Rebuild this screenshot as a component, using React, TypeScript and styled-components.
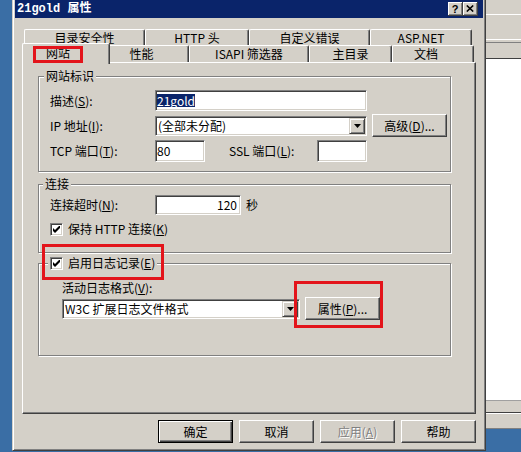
import React from "react";
import styled, { createGlobalStyle, css } from "styled-components";

const FACE = "#d4d0c8";
const SHADOW = "#808080";
const DARK = "#404040";
const HILITE = "#ffffff";
const DESK = "#3a6ea5";
const NAVY = "#0a246a";
const RED = "#e3141b";

const GlobalStyle = createGlobalStyle`
  html, body { margin: 0; padding: 0; background: ${DESK}; }
  body {
    font-family: "Noto Sans CJK SC", "Noto Sans", sans-serif;
    font-size: 12px;
    color: #000;
  }
  * { box-sizing: border-box; }
`;

const Screen = styled.div`
  display: grid;
  grid-template-columns: 12px 474px 1fr;
  align-items: start;
  width: 521px;
  height: 452px;
  overflow: hidden;
`;

const Desktop = styled.div``;

const Dialog = styled.div`
  display: flex;
  flex-direction: column;
  height: 451px;
  background: ${FACE};
  border-left: 1px solid ${FACE};
  border-right: 1px solid ${DARK};
  border-bottom: 1px solid ${DARK};
  box-shadow: inset 1px 0 ${HILITE}, inset -1px -1px ${SHADOW};
  padding: 0 2px 2px 2px;
`;

const TitleBar = styled.div`
  flex: none;
  height: 18px;
  background: ${NAVY};
  display: flex;
  align-items: center;
  padding: 0 5px 0 2px;
`;

const Title = styled.span`
  flex: 1;
  color: #fff;
  font-weight: bold;
  font-family: "Liberation Mono", "Noto Sans CJK SC", monospace;
  font-size: 12px;
  line-height: 18px;
  white-space: nowrap;
`;

const CaptionButtons = styled.div`
  display: flex;
`;

const CaptionButton = styled.div`
  width: 15px;
  height: 14px;
  background: ${FACE};
  box-shadow: inset -1px -1px ${DARK}, inset 1px 1px ${HILITE}, inset -2px -2px ${SHADOW};
  display: flex;
  align-items: center;
  justify-content: center;
  font: bold 11px "Liberation Sans", sans-serif;
  line-height: 14px;
  padding: 0 1px 1px 0;
`;

const Body = styled.div`
  flex: 1;
  display: flex;
  flex-direction: column;
  padding: 11px 7px 0 7px;
`;

const TabRow = styled.div<{ $h: number }>`
  display: flex;
  height: ${(p) => p.$h}px;
  padding-left: 2px;
`;

const Tab = styled.div<{ $w: number; $shift?: number; $selected?: boolean }>`
  flex: none;
  width: ${(p) => p.$w}px;
  background: ${FACE};
  border-top: 1px solid ${HILITE};
  border-left: 1px solid ${HILITE};
  border-right: 1px solid ${DARK};
  border-radius: 2px 2px 0 0;
  box-shadow: inset -1px 0 ${SHADOW};
  display: flex;
  align-items: center;
  justify-content: center;
  padding: 0 ${(p) => p.$shift ?? 0}px 0 0;
  line-height: 14px;
  white-space: nowrap;
  ${(p) =>
    p.$selected &&
    css`
      position: relative;
      z-index: 1;
      width: ${p.$w + 4}px;
      margin: -2px -2px -2px -2px;
      height: calc(100% + 4px);
      padding-bottom: 2px;
    `}
`;

const Panel = styled.div`
  height: 352px;
  border: 1px solid;
  border-color: ${HILITE} ${DARK} ${DARK} ${HILITE};
  box-shadow: inset -1px -1px ${SHADOW};
  padding: 6px 0 0 15px;
  display: flex;
  flex-direction: column;
  align-items: flex-start;
`;

const Group = styled.fieldset<{ $mt: number; $pt: number; $pb: number; $pl: number }>`
  width: 413px;
  min-inline-size: 0;
  margin: ${(p) => p.$mt}px 0 0 0;
  padding: ${(p) => p.$pt}px 0 ${(p) => p.$pb}px ${(p) => p.$pl}px;
  border: 1px solid ${SHADOW};
  box-shadow: inset 1px 1px ${HILITE}, 1px 1px ${HILITE};
  display: flex;
  flex-direction: column;
  gap: 2px;
`;

const Legend = styled.legend<{ $ml: number }>`
  position: relative;
  margin-left: ${(p) => p.$ml}px;
  padding: 0 2px;
  height: 14px;
  line-height: 14px;
  background: ${FACE};
  display: flex;
  align-items: center;
  gap: 5px;
  white-space: nowrap;
`;

const Row = styled.div<{ $h: number }>`
  display: flex;
  align-items: center;
  height: ${(p) => p.$h}px;
`;

const Label = styled.span<{ $w?: number; $ml?: number }>`
  flex: none;
  ${(p) => p.$w !== undefined && css`width: ${p.$w}px;`}
  margin-left: ${(p) => p.$ml ?? 0}px;
  line-height: 14px;
  white-space: nowrap;
`;

const Acc = styled.span`
  text-decoration: underline;
  text-underline-offset: 1px;
`;

const Field = styled.div<{ $w: number; $h: number; $right?: boolean }>`
  flex: none;
  width: ${(p) => p.$w}px;
  height: ${(p) => p.$h}px;
  background: #fff;
  border: 1px solid;
  border-color: ${SHADOW} ${HILITE} ${HILITE} ${SHADOW};
  box-shadow: inset 1px 1px ${DARK}, inset -1px -1px ${FACE};
  padding: 0 ${(p) => (p.$right ? 3 : 1)}px 0 1px;
  display: flex;
  align-items: center;
  justify-content: ${(p) => (p.$right ? "flex-end" : "flex-start")};
  line-height: 14px;
  white-space: nowrap;
`;

const Selected = styled.span`
  background: ${NAVY};
  color: #fff;
  line-height: 13px;
`;

const Combo = styled.div<{ $w: number }>`
  flex: none;
  width: ${(p) => p.$w}px;
  height: 20px;
  background: #fff;
  border: 1px solid;
  border-color: ${SHADOW} ${HILITE} ${HILITE} ${SHADOW};
  box-shadow: inset 1px 1px ${DARK}, inset -1px -1px ${FACE};
  padding: 1px;
  display: flex;
  align-items: center;
  justify-content: space-between;
`;

const ComboText = styled.span`
  padding-left: 1px;
  line-height: 14px;
  white-space: nowrap;
`;

const DropButton = styled.div`
  width: 16px;
  height: 16px;
  background: ${FACE};
  border: 1px solid;
  border-color: ${FACE} ${DARK} ${DARK} ${FACE};
  box-shadow: inset 1px 1px ${HILITE}, inset -1px -1px ${SHADOW};
  display: flex;
  align-items: center;
  justify-content: center;
`;

const Button = styled.div<{ $ml?: number; $default?: boolean; $disabled?: boolean }>`
  flex: none;
  width: 75px;
  height: 23px;
  margin-left: ${(p) => p.$ml ?? 0}px;
  background: ${FACE};
  border: 1px solid;
  border-color: ${HILITE} ${DARK} ${DARK} ${HILITE};
  box-shadow: inset -1px -1px ${SHADOW};
  display: flex;
  align-items: center;
  justify-content: center;
  line-height: 14px;
  white-space: nowrap;
  ${(p) =>
    p.$default &&
    css`
      border-color: #000;
      box-shadow: inset 1px 1px ${HILITE}, inset -1px -1px ${DARK}, inset -2px -2px ${SHADOW};
    `}
  ${(p) =>
    p.$disabled &&
    css`
      color: ${SHADOW};
      text-shadow: 1px 1px ${HILITE};
    `}
`;

const MarkHost = styled.div<{ $ml?: number }>`
  position: relative;
  margin-left: ${(p) => p.$ml ?? 0}px;
  display: flex;
`;

const RedMark = styled.span<{ $l: number; $t: number; $w: number; $h: number }>`
  position: absolute;
  left: ${(p) => p.$l}px;
  top: ${(p) => p.$t}px;
  width: ${(p) => p.$w}px;
  height: ${(p) => p.$h}px;
  border: 3px solid ${RED};
  pointer-events: none;
`;

const CheckBox = styled.span`
  flex: none;
  width: 13px;
  height: 13px;
  background: #fff;
  border: 1px solid;
  border-color: ${SHADOW} ${HILITE} ${HILITE} ${SHADOW};
  box-shadow: inset 1px 1px ${DARK}, inset -1px -1px ${FACE};
  display: flex;
  align-items: center;
  justify-content: center;
`;

const CheckRow = styled.div<{ $h: number }>`
  display: flex;
  align-items: center;
  gap: 5px;
  height: ${(p) => p.$h}px;
  line-height: 14px;
  white-space: nowrap;
`;

const CheckText = styled.span`
  line-height: 14px;
  white-space: nowrap;
`;

const Unit = styled.span`
  margin-left: 5px;
  line-height: 14px;
`;

const ButtonBar = styled.div`
  display: flex;
  justify-content: flex-end;
  gap: 6px;
  margin-top: 6px;
`;

const BackWindow = styled.div`
  display: flex;
  flex-direction: column;
`;

const Strip = styled.div<{ $h: number; $bg: string }>`
  height: ${(p) => p.$h}px;
  background: ${(p) => p.$bg};
`;

const CheckMark = () => (
  <svg width="7" height="7" viewBox="0 0 7 7">
    <path d="M0 2 L2 4 L7 -1 L7 2 L2 7 L0 5 Z" fill="#000" />
  </svg>
);

const DownArrow = () => (
  <svg width="7" height="4" viewBox="0 0 7 4">
    <path d="M0 0 H7 L3.5 4 Z" fill="#000" />
  </svg>
);

const CloseGlyph = () => (
  <svg width="8" height="7" viewBox="0 0 8 7">
    <path d="M0.8 0.5 L7.2 6.5 M7.2 0.5 L0.8 6.5" stroke="#000" strokeWidth="1.6" />
  </svg>
);

const backTabs = [
  { label: "目录安全性", w: 121 },
  { label: "HTTP 头", w: 104 },
  { label: "自定义错误", w: 121 },
  { label: "ASP.NET", w: 102 },
];

const strips: { h: number; bg: string }[] = [
  { h: 14, bg: FACE },
  { h: 1, bg: HILITE },
  { h: 24, bg: FACE },
  { h: 1, bg: HILITE },
  { h: 2, bg: FACE },
  { h: 1, bg: SHADOW },
  { h: 15, bg: FACE },
  { h: 1, bg: DARK },
  { h: 341, bg: HILITE },
  { h: 1, bg: "#a0a0a0" },
  { h: 11, bg: FACE },
  { h: 1, bg: DARK },
  { h: 1, bg: HILITE },
  { h: 14, bg: FACE },
  { h: 1, bg: SHADOW },
];

export default function App() {
  return (
    <>
      <GlobalStyle />
      <Screen>
        <Desktop />
        <Dialog>
          <TitleBar>
            <Title>21gold 属性</Title>
            <CaptionButtons>
              <CaptionButton>?</CaptionButton>
              <CaptionButton>
                <CloseGlyph />
              </CaptionButton>
            </CaptionButtons>
          </TitleBar>
          <Body>
            <TabRow $h={16}>
              {backTabs.map((t) => (
                <Tab key={t.label} $w={t.w}>
                  {t.label}
                </Tab>
              ))}
            </TabRow>
            <TabRow $h={17}>
              <Tab $w={84} $shift={16} $selected>
                网站
                <RedMark $l={10} $t={2} $w={50} $h={17} />
              </Tab>
              <Tab $w={81} $shift={14}>性能</Tab>
              <Tab $w={120}>ISAPI 筛选器</Tab>
              <Tab $w={83}>主目录</Tab>
              <Tab $w={82} $shift={14}>文档</Tab>
            </TabRow>
            <Panel>
              <Group $mt={0} $pt={6} $pb={9} $pl={11}>
                <Legend $ml={-6}>网站标识</Legend>
                <Row $h={23}>
                  <Label $w={105}>
                    描述(<Acc>S</Acc>):
                  </Label>
                  <Field $w={212} $h={21}>
                    <Selected>21gold</Selected>
                  </Field>
                </Row>
                <Row $h={23}>
                  <Label $w={105}>
                    IP 地址(<Acc>I</Acc>):
                  </Label>
                  <Combo $w={212}>
                    <ComboText>(全部未分配)</ComboText>
                    <DropButton>
                      <DownArrow />
                    </DropButton>
                  </Combo>
                  <Button $ml={5}>
                    高级(<Acc>D</Acc>)...
                  </Button>
                </Row>
                <Row $h={23}>
                  <Label $w={105}>
                    TCP 端口(<Acc>T</Acc>):
                  </Label>
                  <Field $w={50} $h={22}>80</Field>
                  <Label $w={88} $ml={24}>
                    SSL 端口(<Acc>L</Acc>):
                  </Label>
                  <Field $w={50} $h={22} />
                </Row>
              </Group>

              <Group $mt={5} $pt={3} $pb={12} $pl={11}>
                <Legend $ml={-7}>连接</Legend>
                <Row $h={22}>
                  <Label $w={105}>
                    连接超时(<Acc>N</Acc>):
                  </Label>
                  <Field $w={86} $h={20} $right>
                    120
                  </Field>
                  <Unit>秒</Unit>
                </Row>
                <CheckRow $h={22}>
                  <CheckBox>
                    <CheckMark />
                  </CheckBox>
                  <CheckText>
                    保持 HTTP 连接(<Acc>K</Acc>)
                  </CheckText>
                </CheckRow>
              </Group>

              <Group $mt={3} $pt={11} $pb={35} $pl={23}>
                <Legend $ml={-14}>
                  <CheckBox>
                    <CheckMark />
                  </CheckBox>
                  <CheckText>
                    启用日志记录(<Acc>E</Acc>)
                  </CheckText>
                  <RedMark $l={-6} $t={-12} $w={122} $h={36} />
                </Legend>
                <Row $h={14}>
                  <Label>
                    活动日志格式(<Acc>V</Acc>):
                  </Label>
                </Row>
                <Row $h={23}>
                  <Combo $w={238}>
                    <ComboText>W3C 扩展日志文件格式</ComboText>
                    <DropButton>
                      <DownArrow />
                    </DropButton>
                  </Combo>
                  <MarkHost $ml={5}>
                    <Button>
                      属性(<Acc>P</Acc>)...
                    </Button>
                    <RedMark $l={-11} $t={-16} $w={89} $h={47} />
                  </MarkHost>
                </Row>
              </Group>
            </Panel>
            <ButtonBar>
              <Button $default>确定</Button>
              <Button>取消</Button>
              <Button $disabled>
                应用(<Acc>A</Acc>)
              </Button>
              <Button>帮助</Button>
            </ButtonBar>
          </Body>
        </Dialog>
        <BackWindow>
          {strips.map((s, i) => (
            <Strip key={i} $h={s.h} $bg={s.bg} />
          ))}
        </BackWindow>
      </Screen>
    </>
  );
}
